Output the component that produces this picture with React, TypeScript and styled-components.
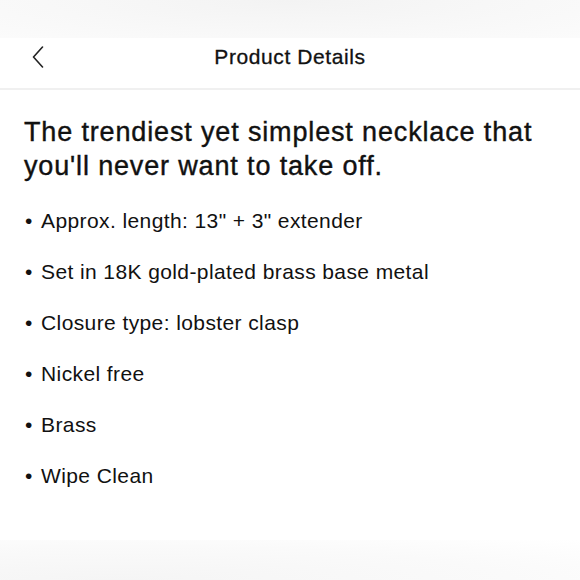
import styled, { createGlobalStyle } from 'styled-components';

const GlobalStyle = createGlobalStyle`
  html, body {
    margin: 0;
    padding: 0;
    background: #ffffff;
  }
  body {
    font-family: "Liberation Sans", Arial, sans-serif;
    color: #111111;
    -webkit-font-smoothing: antialiased;
  }
`;

const Screen = styled.div`
  width: 580px;
  height: 580px;
  display: flex;
  flex-direction: column;
  background: #ffffff;
  overflow: hidden;
`;

const StatusArea = styled.div`
  height: 38px;
  background: radial-gradient(ellipse at 50% 0%, #f3f3f3 0%, #f8f8f8 60%, #fbfbfb 100%);
`;

const Header = styled.header`
  height: 52px;
  box-sizing: border-box;
  padding-bottom: 12px;
  display: grid;
  grid-template-columns: 60px 1fr 60px;
  align-items: center;
  border-bottom: 2px solid #f0f0f0;
`;

const BackButton = styled.button`
  display: flex;
  align-items: center;
  padding: 0 0 0 32px;
  border: none;
  background: none;
  cursor: pointer;
`;

const HeaderTitle = styled.h1`
  margin: 0;
  text-align: center;
  font-size: 21px;
  line-height: 24px;
  font-weight: 400;
  letter-spacing: 0.6px;
  -webkit-text-stroke: 0.3px #111;
  color: #111;
`;

const Content = styled.main`
  flex: 1;
  padding: 25px 24px 0;
`;

const Heading = styled.h2`
  margin: 0 0 12px;
  font-size: 27px;
  line-height: 34px;
  font-weight: 400;
  letter-spacing: 0.85px;
  -webkit-text-stroke: 0.4px #111;
  color: #111;
`;

const List = styled.ul`
  list-style: none;
  margin: 0;
  padding: 0;
`;

const Item = styled.li`
  display: flex;
  font-size: 21px;
  line-height: 51px;
  letter-spacing: 0.4px;
  color: #111;

  &::before {
    content: '•';
    width: 17px;
    padding-left: 1px;
    box-sizing: border-box;
    flex-shrink: 0;
  }
`;

const BottomFade = styled.div`
  height: 40px;
  background: radial-gradient(ellipse at 20% 100%, #f5f5f5 0%, #fafafa 60%, #ffffff 100%);
`;

const features = [
  'Approx. length: 13" + 3" extender',
  'Set in 18K gold-plated brass base metal',
  'Closure type: lobster clasp',
  'Nickel free',
  'Brass',
  'Wipe Clean',
];

export default function App() {
  return (
    <>
      <GlobalStyle />
      <Screen>
        <StatusArea />
        <Header>
          <BackButton aria-label="Back">
            <svg width="12" height="22" viewBox="0 0 12 22" fill="none">
              <path d="M10.5 1L1.5 11l9 10" stroke="#222" strokeWidth="1.6" strokeLinecap="round" strokeLinejoin="round" />
            </svg>
          </BackButton>
          <HeaderTitle>Product Details</HeaderTitle>
          <span />
        </Header>
        <Content>
          <Heading>The trendiest yet simplest necklace that you'll never want to take off.</Heading>
          <List>
            {features.map((f) => (
              <Item key={f}>{f}</Item>
            ))}
          </List>
        </Content>
        <BottomFade />
      </Screen>
    </>
  );
}
